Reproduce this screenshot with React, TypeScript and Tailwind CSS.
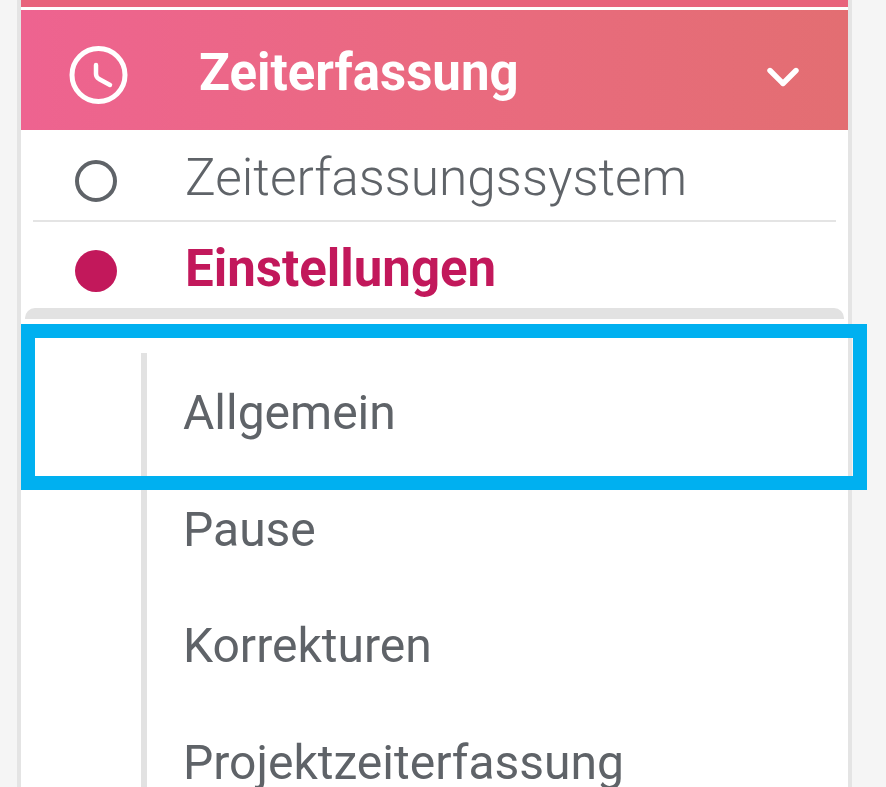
import React from 'react';
import { ChevronDown } from 'lucide-react';

const subItems = ['Allgemein', 'Pause', 'Korrekturen', 'Projektzeiterfassung'];

const ClockIcon = () => (
  <svg className="mt-[10px]" width="60" height="60" viewBox="0 0 60 60" fill="none" stroke="white" strokeLinecap="round" strokeLinejoin="round">
    <circle cx="29.5" cy="30" r="26.5" strokeWidth="5" />
    <path d="M27 20 V29 Q27 32 30 34 L41 40" strokeWidth="4.5" />
  </svg>
);

const App: React.FC = () => {
  return (
    <div className="relative h-[787px] w-[886px] overflow-hidden bg-[#f5f5f5] font-['Roboto',sans-serif]">
      <div className="ml-[17px] h-full w-[835px] border-x-[4px] border-x-[#e4e4e4] bg-white blur-[0.5px]">
        <div className="h-[7px] bg-[#e8637c]" />
        <div className="mt-[3px] flex h-[120px] items-center bg-linear-to-r from-[#ee6390] via-[#ea6a80] to-[#e36e72] pl-[48px] pr-[39px]">
          <ClockIcon />
          <span className="ml-[70px] mt-[4px] text-[51px] font-bold leading-none text-white">Zeiterfassung</span>
          <ChevronDown className="ml-auto mt-[14px] text-white" size={52} strokeWidth={2.5} />
        </div>

        <div className="mx-[12px] flex h-[92px] items-center border-b-[2px] border-b-[#e4e4e4] pl-[42px]">
          <span className="mt-[12px] h-[42px] w-[42px] rounded-full border-[4px] border-[#5f6368]" />
          <span className="ml-[68px] mt-[6px] text-[51.4px] font-light leading-none text-[#5f6368]">Zeiterfassungssystem</span>
        </div>
        <div className="mx-[12px] flex h-[86px] items-center pl-[42px]">
          <span className="mt-[12px] h-[42px] w-[42px] rounded-full bg-[#c2185b]" />
          <span className="ml-[68px] mt-[6px] text-[51px] font-bold leading-none text-[#c2185b]">Einstellungen</span>
        </div>
        <div className="mx-[4px] h-[11px] rounded-t-[10px] bg-[#e2e2e2]" />

        <div className="ml-[120px] mt-[34px] border-l-[6px] border-l-[#e2e2e2] pl-[36px]">
          {subItems.map((item) => (
            <div key={item} className="flex h-[116.5px] items-center pt-[4px] text-[48px] leading-none text-[#5f6368]">
              {item}
            </div>
          ))}
        </div>
      </div>

      {/* blue annotation frame */}
      <div className="absolute left-[21px] top-[324px] h-[166px] w-[846px] border-[14px] border-[#00b0f0]" />
    </div>
  );
};

export default App;
